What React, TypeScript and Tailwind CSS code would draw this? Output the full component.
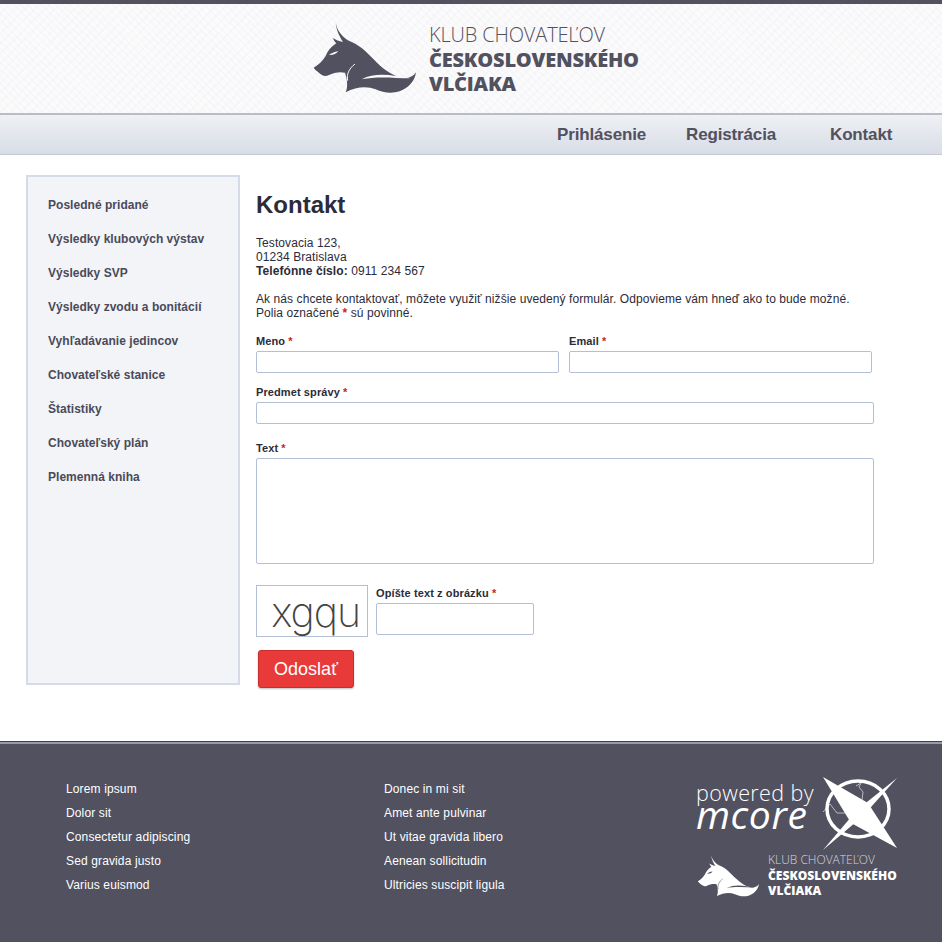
const menu = [
  "Posledné pridané",
  "Výsledky klubových výstav",
  "Výsledky SVP",
  "Výsledky zvodu a bonitácií",
  "Vyhľadávanie jedincov",
  "Chovateľské stanice",
  "Štatistiky",
  "Chovateľský plán",
  "Plemenná kniha",
];

const footerLeft = ["Lorem ipsum", "Dolor sit", "Consectetur adipiscing", "Sed gravida justo", "Varius euismod"];
const footerRight = ["Donec in mi sit", "Amet ante pulvinar", "Ut vitae gravida libero", "Aenean sollicitudin", "Ultricies suscipit ligula"];

function Wolf({ className, fill, streak }: { className: string; fill: string; streak: string }) {
  return (
    <svg viewBox="70 70 312 216" className={className}>
      <path
        fill={fill}
        d="M138 72 C142 95 158 118 186 130 C215 142 240 170 262 192 C285 214 320 240 350 238 C362 237 372 232 379 221 C376 245 358 268 330 278 C305 286 280 282 258 272 C232 262 200 264 168 281 C176 262 172 240 166 222 C150 218 132 222 118 229 C108 234 100 232 92 226 C86 220 76 214 72 207 C85 200 98 188 108 172 C114 158 122 146 140 134 C134 128 132 124 130 118 C138 124 148 128 160 130 C150 114 140 94 138 72 Z"
      />
      <path fill={streak} d="M118 169 C124 164 134 160 146 158 C140 166 130 170 118 169 Z" />
      <path fill="none" stroke={streak} strokeWidth="3" d="M196 196 C180 208 170 224 174 246" />
      <path fill={streak} d="M216 242 C262 218 312 232 362 239 C312 238 262 232 216 242 Z" />
    </svg>
  );
}

function FieldLabel({ text }: { text: string }) {
  return (
    <label className="block text-[11px] leading-[13px] font-bold tracking-[0.1px] text-[#2b2b3a]">
      {text} <span className="text-[#c9232b]">*</span>
    </label>
  );
}

function Input({ className }: { className: string }) {
  return <input type="text" className={`block bg-white border border-[#b3bfd6] rounded-[2px] ${className}`} />;
}

export default function App() {
  return (
    <div className="w-[942px] h-[942px] overflow-hidden bg-white font-['Liberation_Sans',Arial,sans-serif] text-[12px] leading-[14px] tracking-[0.08px] text-[#2b2b3a]">
      {/* top logo */}
      <header className="h-[115px] border-t-4 border-[#52515f] border-b-2 border-b-[#b9bcc4] bg-[#fbfbfc] bg-[repeating-linear-gradient(45deg,rgba(225,228,234,0.14)_0px,rgba(225,228,234,0.14)_2px,transparent_2px,transparent_5px),repeating-linear-gradient(-45deg,rgba(225,228,234,0.14)_0px,rgba(225,228,234,0.14)_2px,transparent_2px,transparent_7px)] flex pl-[313px] pt-[18px]">
        <Wolf className="w-[104px] h-[72px]" fill="#52515f" streak="#f8f9fa" />
        <div className="ml-[12px] mt-[1px] font-['Open_Sans',sans-serif] text-[#52515f] text-[20px] leading-[24.5px]">
          <div className="font-light tracking-[-0.15px]">KLUB CHOVATEĽOV</div>
          <div className="font-extrabold tracking-[-0.22px]">ČESKOSLOVENSKÉHO</div>
          <div className="font-extrabold tracking-[-0.22px]">VLČIAKA</div>
        </div>
      </header>

      <nav className="h-[40px] border-b border-[#c6cad3] bg-gradient-to-b from-[#eef0f4] to-[#d8dde6] flex items-center pl-[557px] text-[17px] font-bold text-[#52515f] tracking-[-0.15px]">
        <a className="w-[129px]">Prihlásenie</a>
        <a className="w-[144px]">Registrácia</a>
        <a>Kontakt</a>
      </nav>

      <div className="flex pl-[26px] pt-[20px] h-[586px]">
        <aside className="w-[214px] h-[510px] border-2 border-[#d5dbe8] bg-[#f2f4f8] pl-[20px] pt-[21px]">
          <ul className="flex flex-col gap-[20px] font-bold tracking-[0.03px] text-[#4a4a58]">
            {menu.map((item) => (
              <li key={item}>{item}</li>
            ))}
          </ul>
        </aside>

        <main className="ml-[16px] w-[640px]">
          <h1 className="text-[24px] leading-[28px] font-bold tracking-normal text-[#2b2b3a] mt-[16px]">Kontakt</h1>
          <p className="mt-[17px]">
            Testovacia 123,
            <br />
            01234 Bratislava
            <br />
            <b>Telefónne číslo:</b> 0911 234 567
          </p>
          <p className="mt-[14px]">
            Ak nás chcete kontaktovať, môžete využiť nižšie uvedený formulár. Odpovieme vám hneď ako to bude možné.
            <br />
            Polia označené <span className="font-bold text-[#c9232b]">*</span> sú povinné.
          </p>

          <div className="flex gap-[10px] mt-[15px]">
            <div>
              <FieldLabel text="Meno" />
              <Input className="w-[303px] h-[22px] mt-[3px]" />
            </div>
            <div>
              <FieldLabel text="Email" />
              <Input className="w-[303px] h-[22px] mt-[3px]" />
            </div>
          </div>

          <div className="mt-[13px]">
            <FieldLabel text="Predmet správy" />
            <Input className="w-[618px] h-[22px] mt-[3px]" />
          </div>

          <div className="mt-[18px]">
            <FieldLabel text="Text" />
            <textarea className="block w-[618px] h-[106px] mt-[3px] bg-white border border-[#b3bfd6] rounded-[2px] resize-none" />
          </div>

          <div className="flex gap-[8px] mt-[21px]">
            <div className="w-[112px] h-[52px] border border-[#b3bfd6] bg-white flex justify-end pr-[7px] overflow-hidden">
              <span className="font-['Inter',sans-serif] font-extralight text-[41px] leading-[52px] tracking-[-1px] text-[#444444]">xgqu</span>
            </div>
            <div className="pt-[2px]">
              <FieldLabel text="Opíšte text z obrázku" />
              <Input className="w-[158px] h-[32px] mt-[3px]" />
            </div>
          </div>

          <button className="block ml-[2px] mt-[13px] w-[96px] h-[38px] bg-[#e83a38] border border-[#c92d2c] rounded-[3px] shadow-[0_1px_2px_rgba(0,0,0,0.25)] text-white text-[18px] leading-[36px] tracking-normal">
            Odoslať
          </button>
        </main>
      </div>

      <footer className="h-[201px] bg-[#52515f] border-t border-[#3f3f49] text-white">
        <div className="h-[2px] bg-[#9a9aa4]" />
        <div className="flex pl-[66px] pt-[38px] tracking-[0.13px]">
          <ul className="w-[318px] flex flex-col gap-[10px]">
            {footerLeft.map((item) => (
              <li key={item}>{item}</li>
            ))}
          </ul>
          <ul className="w-[312px] flex flex-col gap-[10px]">
            {footerRight.map((item) => (
              <li key={item}>{item}</li>
            ))}
          </ul>
          <div className="tracking-normal">
            <div className="flex h-[72px]">
              <div className="w-[119px] pt-[2px] font-['Open_Sans',sans-serif] whitespace-nowrap">
                <div className="font-light text-[21.5px] leading-[18px] tracking-[0.4px]">powered by</div>
                <div className="font-medium italic text-[39px] leading-[24px] tracking-[0.6px]">mcore</div>
              </div>
              <svg viewBox="0 0 90 85" className="w-[90px] h-[85px] -mt-[12px] shrink-0">
                <path fill="none" stroke="#b9b9c0" strokeWidth="1" d="M41 16 L46 13 L44 17 L48 22 L47 30 M8 42 L15 34 L22 43 L33 43" />
                <ellipse cx="43" cy="39" rx="31" ry="28" fill="none" stroke="#fff" strokeWidth="3.5" />
                <path fill="#fff" d="M8 7 L53 33 L82 78 L36 53 Z" />
                <path fill="#fff" d="M82 8 L48 46 L8 80 L42 40 Z" />
              </svg>
            </div>
            <div className="flex ml-[1px]">
              <Wolf className="w-[63px] h-[43px] shrink-0" fill="#ffffff" streak="#52515f" />
              <div className="ml-[8px] font-['Open_Sans',sans-serif] text-[12px] leading-[15.5px] -mt-[2px] whitespace-nowrap">
                <div className="font-light text-[#d5d5da]">KLUB CHOVATEĽOV</div>
                <div className="font-extrabold tracking-[0.05px]">ČESKOSLOVENSKÉHO</div>
                <div className="font-extrabold tracking-[0.05px]">VLČIAKA</div>
              </div>
            </div>
          </div>
        </div>
      </footer>
    </div>
  );
}
